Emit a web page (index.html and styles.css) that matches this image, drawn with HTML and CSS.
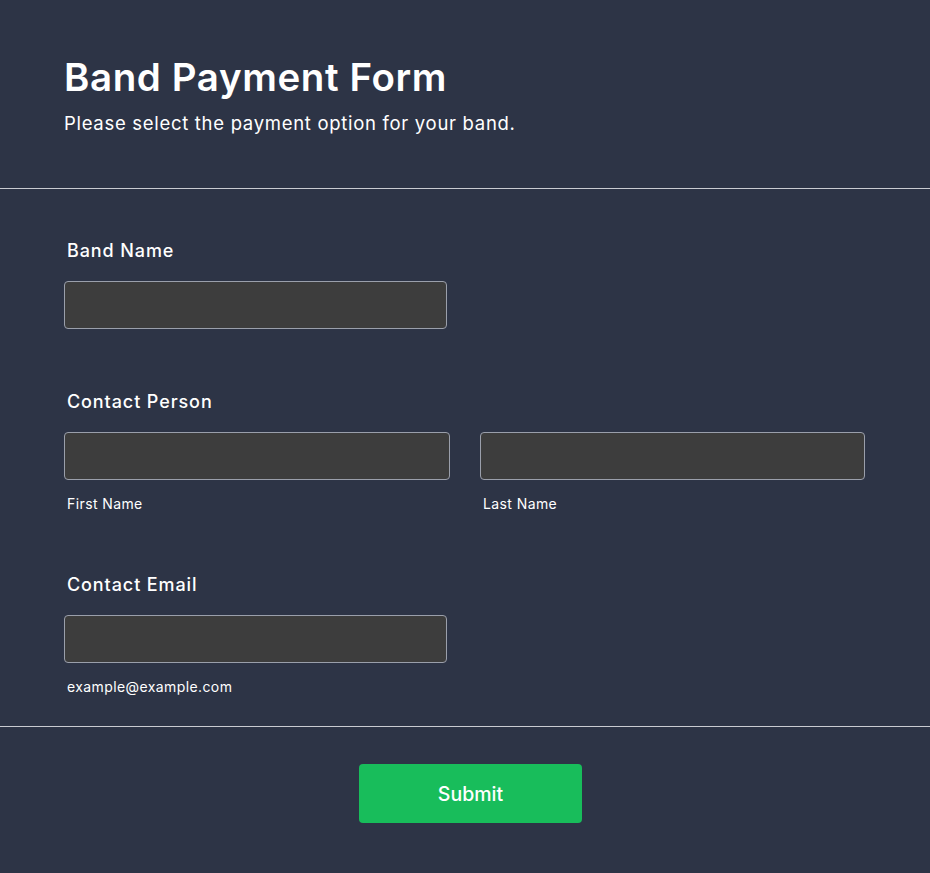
FILE: index.html
```html
<!DOCTYPE html>
<html lang="en">
<head>
<meta charset="utf-8">
<title>Band Payment Form</title>
<link rel="stylesheet" href="styles.css">
</head>
<body>
<div class="page">
  <header class="form-header">
    <h1 class="title">Band Payment Form</h1>
    <p class="subtitle">Please select the payment option for your band.</p>
  </header>
  <section class="form-body">
    <div class="field">
      <label class="label">Band Name</label>
      <div class="input half"></div>
    </div>
    <div class="field">
      <label class="label">Contact Person</label>
      <div class="cols">
        <div class="col">
          <div class="input"></div>
          <span class="sublabel">First Name</span>
        </div>
        <div class="col">
          <div class="input"></div>
          <span class="sublabel">Last Name</span>
        </div>
      </div>
    </div>
    <div class="field">
      <label class="label">Contact Email</label>
      <div class="input half"></div>
      <span class="sublabel">example@example.com</span>
    </div>
  </section>
  <footer class="form-footer">
    <button class="submit" type="button">Submit</button>
  </footer>
</div>
</body>
</html>
```

FILE: styles.css
```css
* { box-sizing: border-box; }
html, body { margin: 0; padding: 0; }
body {
  background: #2d3446;
  color: #ffffff;
  font-family: Inter, "Noto Sans", sans-serif;
  width: 930px;
  height: 873px;
  overflow: hidden;
}
.page { display: flex; flex-direction: column; }
.form-header {
  padding: 54px 64px 0;
  height: 189px;
  border-bottom: 1px solid #c9cbd1;
}
.title {
  margin: 0;
  font-size: 38.5px;
  line-height: 46px;
  font-weight: 600;
  letter-spacing: 0.6px;
}
.subtitle {
  margin: 12px 0 0;
  font-size: 18.5px;
  line-height: 22px;
  font-weight: 400;
  letter-spacing: 0.7px;
}
.form-body {
  padding: 51px 64px 31px;
  display: flex;
  flex-direction: column;
  gap: 62px;
  border-bottom: 1px solid #c9cbd1;
}
.field { display: flex; flex-direction: column; }
.label {
  display: block;
  padding-left: 3px;
  font-size: 18px;
  line-height: 22px;
  font-weight: 500;
  letter-spacing: 0.9px;
  margin-bottom: 19px;
}
.input {
  height: 48px;
  background: #3d3d3d;
  border: 1px solid #9a9fab;
  border-radius: 4px;
}
.half { width: 383px; }
.cols {
  display: grid;
  grid-template-columns: 386px 385px;
  gap: 30px;
}
.col { display: flex; flex-direction: column; }
.sublabel {
  display: block;
  margin-top: 15px;
  padding-left: 3px;
  font-size: 14px;
  line-height: 17px;
  letter-spacing: 0.4px;
}
.form-footer {
  display: flex;
  justify-content: center;
  padding: 37px 0 0 11px;
}
.submit {
  width: 223px;
  height: 59px;
  background: #18bd5b;
  color: #ffffff;
  border: none;
  border-radius: 4px;
  font-family: Inter, "Noto Sans", sans-serif;
  font-size: 19.5px;
  font-weight: 500;
}
```
